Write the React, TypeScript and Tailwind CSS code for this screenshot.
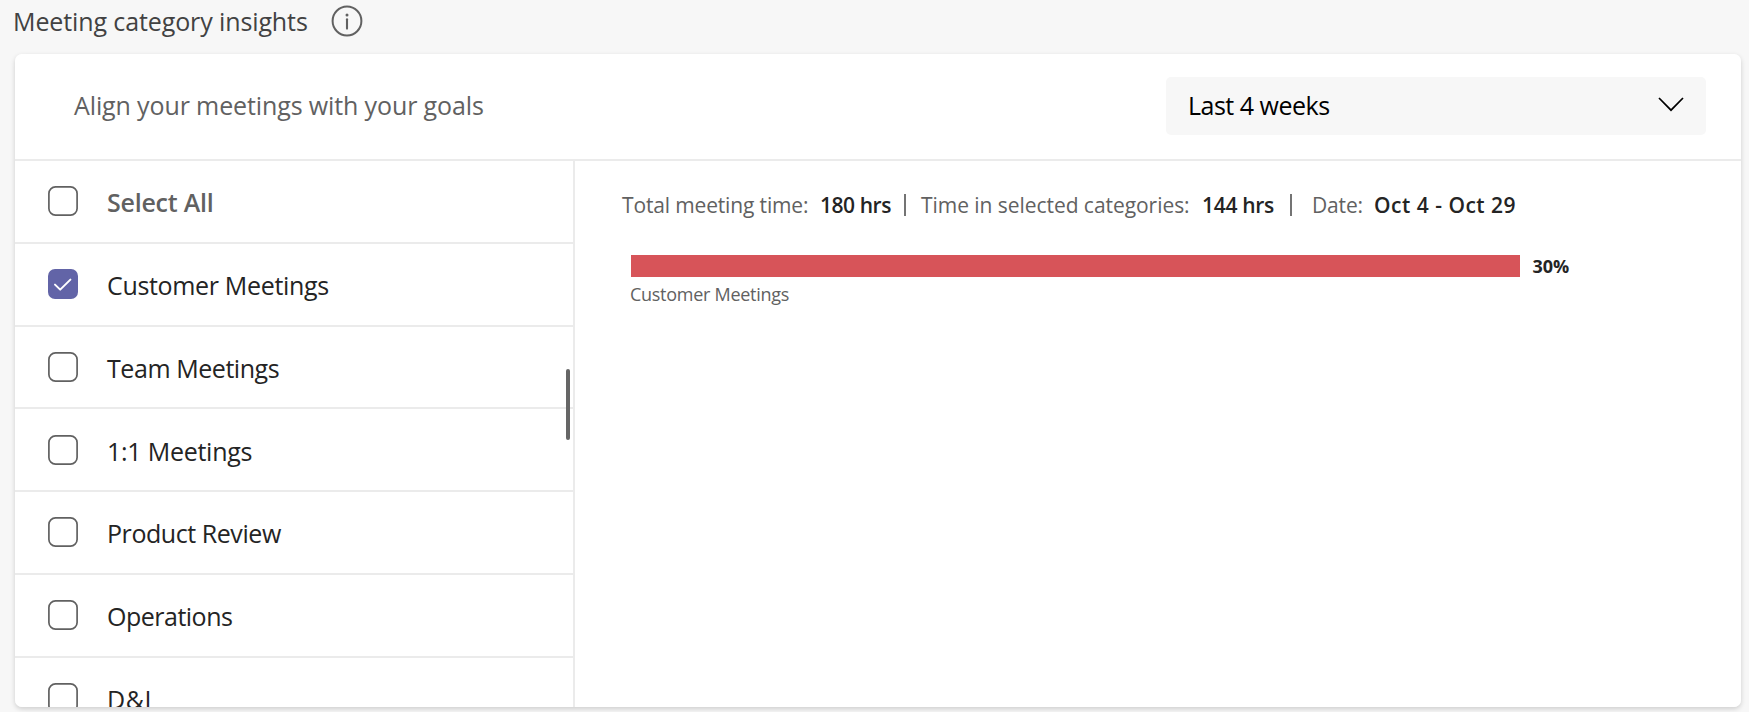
type Category = { label: string; checked?: boolean; className: string };

const categories: Category[] = [
  { label: "Select All", className: "font-semibold text-[#616161] tracking-[-0.23px]" },
  { label: "Customer Meetings", checked: true, className: "text-[#242424] tracking-[-0.33px]" },
  { label: "Team Meetings", className: "text-[#242424] tracking-[-0.44px]" },
  { label: "1:1 Meetings", className: "text-[#242424] tracking-[-0.25px]" },
  { label: "Product Review", className: "text-[#242424] tracking-[-0.44px]" },
  { label: "Operations", className: "text-[#242424] tracking-[-0.5px]" },
  { label: "D&I", className: "text-[#242424] tracking-[0.6px]" },
];

function InfoIcon() {
  return (
    <svg width="32" height="32" viewBox="0 0 32 32" className="shrink-0">
      <circle cx="16" cy="16" r="14.4" fill="none" stroke="#616161" strokeWidth="2" />
      <circle cx="16" cy="9.9" r="1.5" fill="#616161" />
      <path d="M16 14.3V23.6" stroke="#616161" strokeWidth="2.1" strokeLinecap="round" />
    </svg>
  );
}

function Checkbox({ checked }: { checked?: boolean }) {
  return (
    <svg width="30" height="30" viewBox="0 0 30 30" className="shrink-0">
      {checked ? (
        <>
          <rect width="30" height="30" rx="7" fill="#6264a7" />
          <path
            d="M7 15.6L12.2 20.6L22.4 10.6"
            fill="none"
            stroke="#fff"
            strokeWidth="2"
            strokeLinecap="round"
            strokeLinejoin="round"
          />
        </>
      ) : (
        <rect x="0.9" y="0.9" width="28.2" height="28.2" rx="6.6" fill="#fff" stroke="#616161" strokeWidth="1.7" />
      )}
    </svg>
  );
}

function Header() {
  return (
    <div className="flex h-[107px] items-start justify-between border-b-2 border-[#ebebeb] pl-[59px] pr-[35px] pt-[23px]">
      <span className="pt-[9px] text-[25px] leading-[38px] tracking-[-0.12px] text-[#616161]">
        Align your meetings with your goals
      </span>
      <button className="flex h-[58px] w-[540px] items-center justify-between rounded-[5px] bg-[#f7f7f7] pl-[22px] pr-[22px] text-left">
        <span className="mb-[2px] text-[25px] leading-[38px] tracking-[-0.5px] text-black">Last 4 weeks</span>
        <svg width="26" height="16" viewBox="0 0 26 16" className="mb-[5px]">
          <path d="M1 2L13 14.2L25 2" fill="none" stroke="#000" strokeWidth="1.7" />
        </svg>
      </button>
    </div>
  );
}

function CategoryList() {
  return (
    <div className="relative w-[560px] shrink-0 overflow-hidden border-r-2 border-[#ebebeb]">
      {categories.map((c) => (
        <div key={c.label} className="flex h-[82.75px] items-center gap-[29px] border-b-2 border-[#ebebeb] pl-[33px]">
          <Checkbox checked={c.checked} />
          <span className={`pt-[2px] text-[25px] leading-[34px] ${c.className}`}>{c.label}</span>
        </div>
      ))}
      <div className="absolute right-[3px] top-[208px] h-[71px] w-[4px] rounded-full bg-[#666]" />
    </div>
  );
}

function Summary() {
  return (
    <div className="flex h-[30px] items-center whitespace-pre text-[21px] leading-[30px] text-[#616161]">
      <span className="w-[198px] tracking-[-0.15px]">Total meeting time:</span>
      <b className="w-[84px] font-semibold tracking-[-0.45px] text-[#242424]">180 hrs</b>
      <i className="h-[22px] w-[2px] bg-[#747474]" />
      <span className="ml-[15px] w-[281px] tracking-[-0.05px]">Time in selected categories:</span>
      <b className="w-[88px] font-semibold tracking-[-0.3px] text-[#242424]">144 hrs</b>
      <i className="h-[22px] w-[2px] bg-[#747474]" />
      <span className="ml-[20px] w-[62px] tracking-[-0.15px]">Date:</span>
      <b className="font-semibold tracking-[0.5px] text-[#242424]">Oct 4 - Oct 29</b>
    </div>
  );
}

function Chart() {
  return (
    <div className="flex-1 pl-[47px] pt-[29px]">
      <Summary />
      <div className="ml-[8.5px] mt-[34.5px] flex h-[22px] items-center gap-[12.5px]">
        <div className="h-[22px] w-[889.5px] bg-[#d75459]" />
        <span className="pt-px text-[18px] font-bold leading-[22px] text-[#242424]">30%</span>
      </div>
      <div className="ml-[8px] mt-[5px] text-[18px] leading-[25px] tracking-[-0.28px] text-[#616161]">
        Customer Meetings
      </div>
    </div>
  );
}

export default function App() {
  return (
    <div className="h-[712px] w-[1749px] overflow-hidden bg-[#f7f7f7] font-['Open_Sans','Noto_Sans',sans-serif]">
      <div className="flex h-[54px] items-start gap-[23px] pl-[13px] pt-[5px]">
        <h1 className="text-[25px] leading-[32px] tracking-[-0.11px] text-[#424242]">Meeting category insights</h1>
        <InfoIcon />
      </div>
      <div className="ml-[15px] h-[653px] w-[1726px] rounded-[7px] shadow-[0_2px_5px_rgba(0,0,0,0.17)]">
        <div className="flex h-full flex-col overflow-hidden rounded-[7px] bg-white">
          <Header />
          <div className="flex min-h-0 flex-1">
            <CategoryList />
            <Chart />
          </div>
        </div>
      </div>
    </div>
  );
}
